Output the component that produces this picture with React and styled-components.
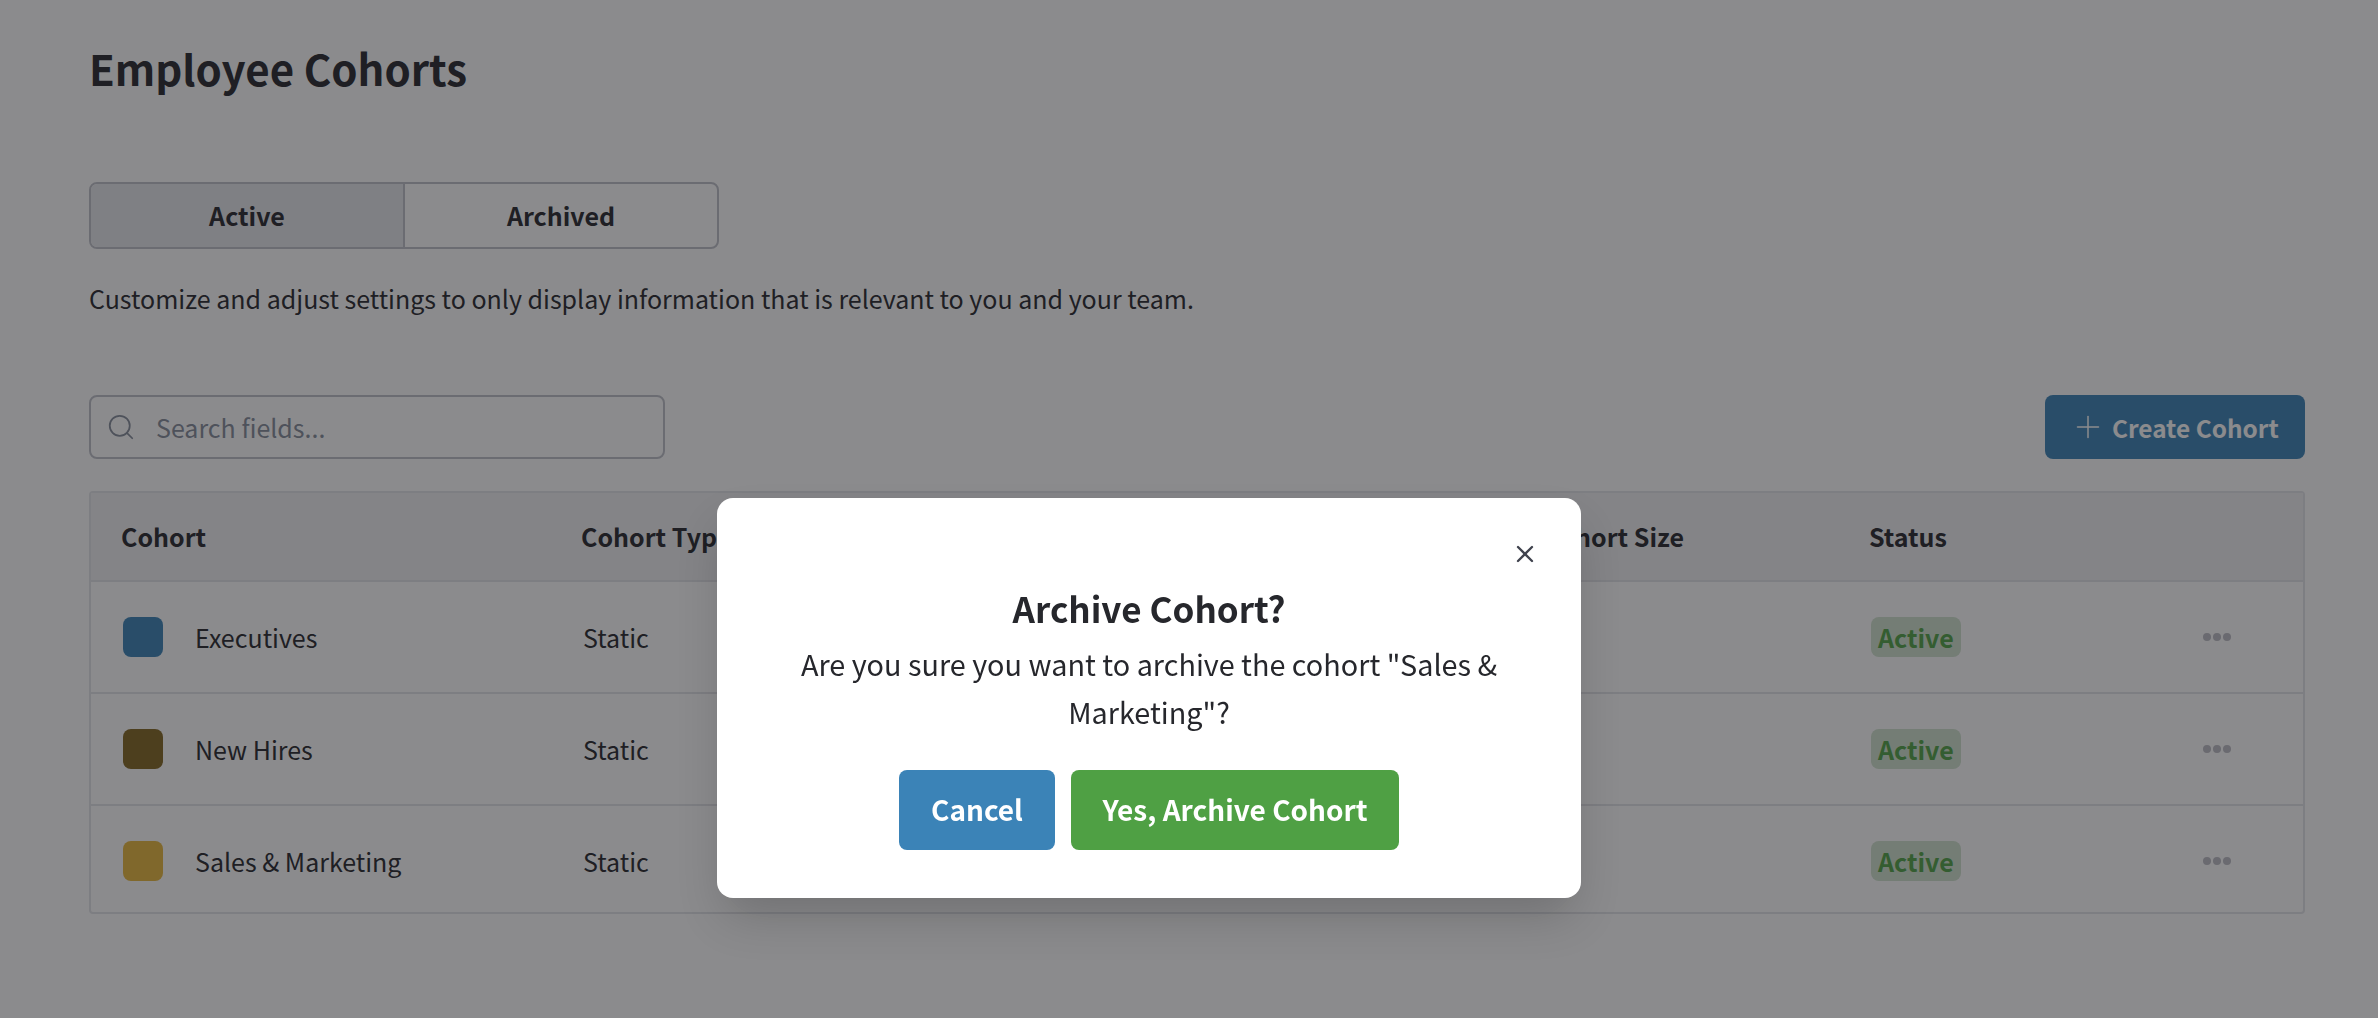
import styled, { createGlobalStyle } from "styled-components";
import { Search, Plus, X } from "lucide-react";

const GlobalStyle = createGlobalStyle`
  * { box-sizing: border-box; }
  body {
    margin: 0;
    background: #ffffff;
    color: #26272c;
    font-family: "Noto Sans CJK SC", "Noto Sans", sans-serif;
  }
`;

const Page = styled.div`
  padding: 38px 73px 0 89px;
  height: 1018px;
  overflow: hidden;
`;

const Title = styled.h1`
  margin: 0;
  font-size: 42px;
  line-height: 60px;
  font-weight: 600;
`;

const Tabs = styled.div`
  display: flex;
  width: 630px;
  height: 67px;
  margin-top: 84px;
  border: 2px solid #bfc1c9;
  border-radius: 8px;
  overflow: hidden;
`;

const Tab = styled.div`
  flex: 1;
  display: flex;
  align-items: center;
  justify-content: center;
  padding-bottom: 1px;
  font-size: 25px;
  font-weight: 600;
  background: ${(p) => (p.$active ? "#e6e8ec" : "transparent")};
  & + & {
    border-left: 2px solid #bfc1c9;
  }
`;

const Hint = styled.p`
  margin: 29px 0 0;
  font-size: 25px;
  line-height: 40px;
`;

const Toolbar = styled.div`
  display: flex;
  justify-content: space-between;
  align-items: center;
  margin-top: 77px;
`;

const SearchBox = styled.div`
  display: flex;
  align-items: center;
  gap: 20px;
  width: 576px;
  height: 64px;
  padding: 0 15px;
  border: 2px solid #bfc1c9;
  border-radius: 8px;
  color: #858c9a;
`;

const SearchInput = styled.input`
  flex: 1;
  min-width: 0;
  border: 0;
  outline: 0;
  padding: 0;
  background: transparent;
  font: inherit;
  font-size: 25px;
  &::placeholder {
    color: #858c9a;
    opacity: 1;
  }
`;

const CreateButton = styled.button`
  display: flex;
  align-items: center;
  gap: 6px;
  width: 260px;
  height: 64px;
  padding: 0 0 0 25px;
  border: 0;
  border-radius: 8px;
  background: #3b83b7;
  color: #ffffff;
  font: inherit;
  font-size: 24.4px;
  font-weight: 600;
`;

const Table = styled.div`
  margin-top: 32px;
  border: 2px solid #e3e4e8;
  border-radius: 4px;
  height: 423px;
`;

const Row = styled.div`
  display: grid;
  grid-template-columns: 460px 962px 326px 1fr;
  align-items: center;
  height: ${(p) => (p.$last ? "106px" : "112px")};
  padding-top: ${(p) => (p.$last ? "3px" : "0")};
  border-bottom: ${(p) => (p.$last ? "0" : "2px solid #e3e4e8")};
`;

const HeaderRow = styled(Row)`
  height: 89px;
  padding-bottom: 2px;
  background: #f1f1f3;
  font-size: 25px;
  font-weight: 600;
`;

const HeadCell = styled.div`
  padding-left: 30px;
`;

const Cell = styled.div`
  display: flex;
  align-items: center;
  gap: 32px;
  padding-left: 32px;
  font-size: 25px;
`;

const StatusCell = styled(Cell)`
  justify-content: space-between;
  padding-right: 72px;
`;

const Swatch = styled.span`
  width: 40px;
  height: 40px;
  border-radius: 8px;
  background: ${(p) => p.$color};
`;

const Badge = styled.span`
  display: flex;
  align-items: center;
  height: 40px;
  padding: 0 7px;
  border-radius: 8px;
  background: #d0e2ce;
  color: #50a246;
  font-weight: 600;
`;

const Dots = styled.svg`
  width: 28px;
  height: 8px;
  fill: #bcbcc4;
`;

const Overlay = styled.div`
  position: fixed;
  inset: 0;
  background: rgba(24, 24, 27, 0.5);
`;

const Modal = styled.div`
  position: absolute;
  left: 717px;
  top: 498px;
  width: 864px;
  height: 400px;
  padding: 86px 48px 0;
  background: #ffffff;
  border-radius: 16px;
  box-shadow: 0 24px 48px -8px rgba(0, 0, 0, 0.2);
  text-align: center;
`;

const CloseButton = styled.button`
  position: absolute;
  top: 42px;
  right: 42px;
  display: flex;
  padding: 0;
  border: 0;
  background: none;
  color: #3f424d;
`;

const ModalTitle = styled.h2`
  margin: 0;
  font-size: 35px;
  line-height: 48px;
  font-weight: 600;
`;

const ModalText = styled.p`
  margin: 8px 0 0;
  font-size: 28.8px;
  line-height: 48px;
`;

const ModalActions = styled.div`
  display: flex;
  justify-content: center;
  gap: 16px;
  margin-top: 34px;
`;

const ModalButton = styled.button`
  width: ${(p) => p.$width}px;
  height: 80px;
  padding: 0 0 2px;
  border: 0;
  border-radius: 8px;
  background: ${(p) => p.$color};
  color: #ffffff;
  font: inherit;
  font-size: 28px;
  font-weight: 600;
`;

const cohorts = [
  { name: "Executives", color: "#3b83b7" },
  { name: "New Hires", color: "#826621" },
  { name: "Sales & Marketing", color: "#e8b83d" },
];

export default function App() {
  return (
    <>
      <GlobalStyle />
      <Page>
        <Title>Employee Cohorts</Title>
        <Tabs>
          <Tab $active>Active</Tab>
          <Tab>Archived</Tab>
        </Tabs>
        <Hint>Customize and adjust settings to only display information that is relevant to you and your team.</Hint>
        <Toolbar>
          <SearchBox>
            <Search size={30} strokeWidth={1.4} />
            <SearchInput placeholder="Search fields..." />
          </SearchBox>
          <CreateButton>
            <Plus size={36} strokeWidth={1} />
            Create Cohort
          </CreateButton>
        </Toolbar>
        <Table>
          <HeaderRow>
            <HeadCell>Cohort</HeadCell>
            <HeadCell>Cohort Type</HeadCell>
            <HeadCell>Cohort Size</HeadCell>
            <HeadCell>Status</HeadCell>
          </HeaderRow>
          {cohorts.map((c, i) => (
            <Row key={c.name} $last={i === cohorts.length - 1}>
              <Cell>
                <Swatch $color={c.color} />
                {c.name}
              </Cell>
              <Cell>Static</Cell>
              <Cell />
              <StatusCell>
                <Badge>Active</Badge>
                <Dots viewBox="0 0 28 8">
                  <circle cx="4" cy="4" r="4" />
                  <circle cx="14" cy="4" r="4" />
                  <circle cx="24" cy="4" r="4" />
                </Dots>
              </StatusCell>
            </Row>
          ))}
        </Table>
      </Page>
      <Overlay>
        <Modal>
          <CloseButton>
            <X size={28} strokeWidth={2} />
          </CloseButton>
          <ModalTitle>Archive Cohort?</ModalTitle>
          <ModalText>Are you sure you want to archive the cohort "Sales &amp; Marketing"?</ModalText>
          <ModalActions>
            <ModalButton $width={156} $color="#3b83b7">Cancel</ModalButton>
            <ModalButton $width={328} $color="#4fa044">Yes, Archive Cohort</ModalButton>
          </ModalActions>
        </Modal>
      </Overlay>
    </>
  );
}
